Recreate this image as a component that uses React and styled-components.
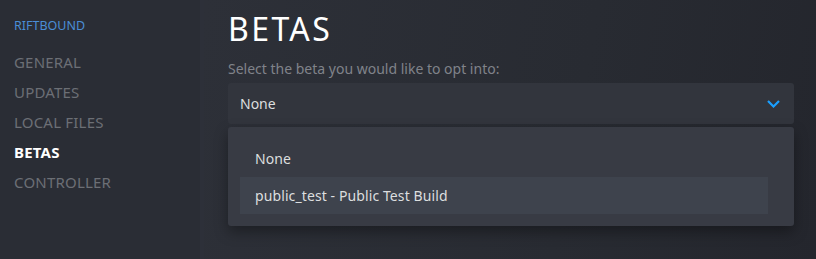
import React from "react";
import styled, { createGlobalStyle } from "styled-components";

const Global = createGlobalStyle`
  html, body { margin: 0; padding: 0; background: #25282f; }
  body { font-family: "Noto Sans", "Open Sans", Arial, sans-serif; }
  #root { width: 816px; height: 259px; overflow: hidden; }
`;

const Page = styled.div`
  display: flex;
  width: 816px;
  height: 259px;
  overflow: hidden;
`;

const Sidebar = styled.nav`
  width: 204px;
  flex: none;
  box-sizing: border-box;
  padding: 18px 0 0 14px;
  background: #2a2d35;
  border-right: 4px solid #2d3039;
  display: flex;
  flex-direction: column;
`;

const GameTitle = styled.div`
  font-size: 12.5px;
  color: #4a8ed6;
  line-height: 16px;
  margin-bottom: 13px;
`;

const NavItem = styled.div`
  font-size: 15px;
  line-height: 30px;
  height: 30px;
  text-transform: uppercase;
  color: ${(p) => (p.$active ? "#ffffff" : "#6c6f75")};
  font-weight: ${(p) => (p.$active ? 700 : 400)};
  letter-spacing: 0.2px;
`;

const Main = styled.main`
  flex: 1;
  box-sizing: border-box;
  padding: 8px 22px 0 24px;
  background: linear-gradient(100deg, #2d3038 0%, #282b32 60%, #24262d 100%);
`;

const Heading = styled.h1`
  margin: 0;
  font-size: 32px;
  font-weight: 400;
  letter-spacing: 2.4px;
  color: #ffffff;
  line-height: 42px;
`;

const Hint = styled.div`
  margin-top: 9px;
  font-size: 14px;
  line-height: 20px;
  color: #80838a;
`;

const Select = styled.div`
  margin-top: 4px;
  height: 41px;
  box-sizing: border-box;
  border-radius: 3px;
  background: #32353d;
  display: flex;
  align-items: center;
  justify-content: space-between;
  padding: 0 14px 0 12px;
  font-size: 14px;
  color: #dcdedf;
`;

const Menu = styled.div`
  margin-top: 3px;
  border-radius: 3px;
  background: #383b44;
  box-sizing: border-box;
  padding: 13px 26px 12px 12px;
  box-shadow: 0 6px 14px rgba(0, 0, 0, 0.35);
  display: flex;
  flex-direction: column;
`;

const Option = styled.div`
  height: 37px;
  display: flex;
  align-items: center;
  padding-left: 15px;
  font-size: 14px;
  letter-spacing: 0.1px;
  color: #dcdedf;
  background: ${(p) => (p.$hover ? "#3e434d" : "transparent")};
`;

const Chevron = () => (
  <svg width="13" height="8" viewBox="0 0 13 8">
    <path d="M1 1 L6.5 6.5 L12 1" fill="none" stroke="#1a9fff" strokeWidth="2.2" />
  </svg>
);

export default function App() {
  return (
    <>
      <Global />
      <Page>
        <Sidebar>
          <GameTitle>RIFTBOUND</GameTitle>
          <NavItem>General</NavItem>
          <NavItem>Updates</NavItem>
          <NavItem>Local Files</NavItem>
          <NavItem $active>Betas</NavItem>
          <NavItem>Controller</NavItem>
        </Sidebar>
        <Main>
          <Heading>BETAS</Heading>
          <Hint>Select the beta you would like to opt into:</Hint>
          <Select>
            <span>None</span>
            <Chevron />
          </Select>
          <Menu>
            <Option>None</Option>
            <Option $hover>public_test - Public Test Build</Option>
          </Menu>
        </Main>
      </Page>
    </>
  );
}
